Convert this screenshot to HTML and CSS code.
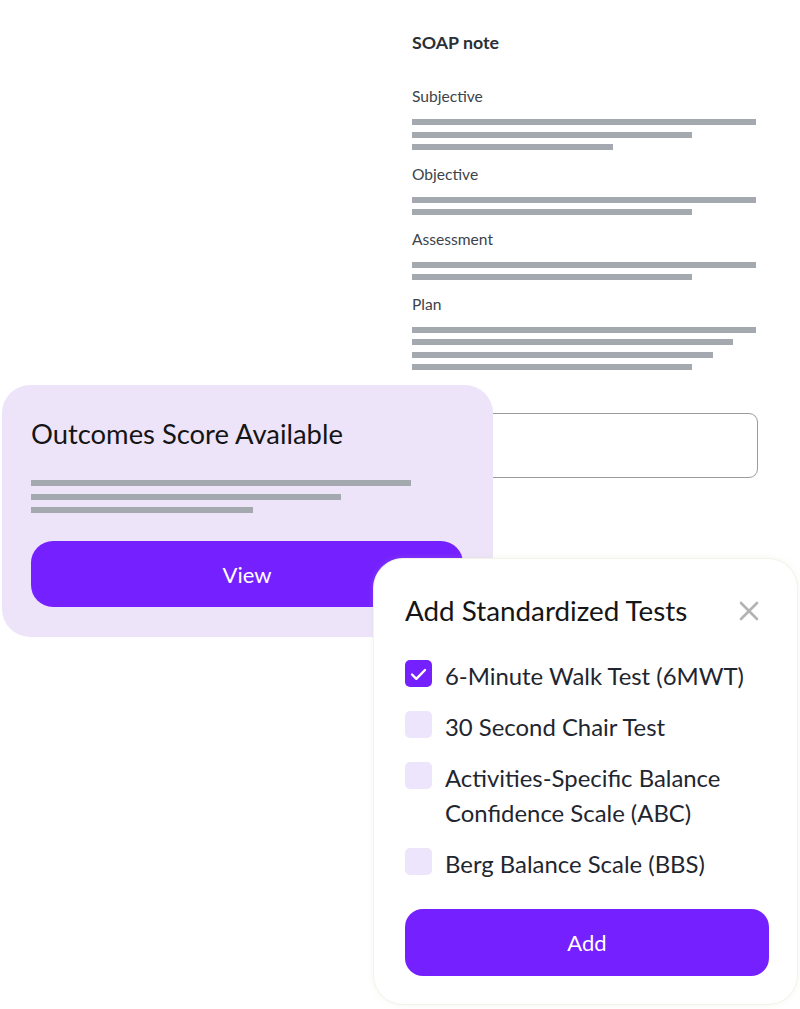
FILE: index.html
```html
<!DOCTYPE html>
<html lang="en">
<head>
<meta charset="utf-8">
<title>SOAP note</title>
<link rel="stylesheet" href="styles.css">
</head>
<body>
<div class="canvas">
  <section class="soap">
    <h2 class="soap-title">SOAP note</h2>
    <div class="soap-section">
      <div class="soap-label">Subjective</div>
      <div class="bars">
        <div class="bar w-full"></div>
        <div class="bar w-280"></div>
        <div class="bar w-200"></div>
      </div>
    </div>
    <div class="soap-section">
      <div class="soap-label">Objective</div>
      <div class="bars">
        <div class="bar w-full"></div>
        <div class="bar w-280"></div>
      </div>
    </div>
    <div class="soap-section">
      <div class="soap-label">Assessment</div>
      <div class="bars">
        <div class="bar w-full"></div>
        <div class="bar w-280"></div>
      </div>
    </div>
    <div class="soap-section">
      <div class="soap-label">Plan</div>
      <div class="bars">
        <div class="bar w-full"></div>
        <div class="bar w-321"></div>
        <div class="bar w-301"></div>
        <div class="bar w-280"></div>
      </div>
    </div>
    <div class="soap-section last">
      <div class="soap-label">Changes</div>
      <div class="textbox"></div>
    </div>
  </section>

  <section class="outcome-card">
    <h3 class="outcome-title">Outcomes Score Available</h3>
    <div class="bars outcome-bars">
      <div class="bar o-1"></div>
      <div class="bar o-2"></div>
      <div class="bar o-3"></div>
    </div>
    <button class="btn view-btn">View</button>
  </section>

  <section class="tests-card">
    <div class="tests-head">
      <h3 class="tests-title">Add Standardized Tests</h3>
      <svg class="close" width="20" height="20" viewBox="0 0 20 20" aria-hidden="true">
        <path d="M2 2 L18 18 M18 2 L2 18" stroke="#b3b3b3" stroke-width="2.6" stroke-linecap="round" fill="none"/>
      </svg>
    </div>
    <ul class="tests-list">
      <li class="test-item">
        <span class="box checked">
          <svg width="27" height="27" viewBox="0 0 27 27" aria-hidden="true">
            <path d="M7 14.5 L11.3 18.8 L20 10" stroke="#fff" stroke-width="2.4" stroke-linecap="round" stroke-linejoin="round" fill="none"/>
          </svg>
        </span>
        <span class="test-text">6-Minute Walk Test (6MWT)</span>
      </li>
      <li class="test-item">
        <span class="box"></span>
        <span class="test-text">30 Second Chair Test</span>
      </li>
      <li class="test-item">
        <span class="box"></span>
        <span class="test-text">Activities-Specific Balance<br>Confidence Scale (ABC)</span>
      </li>
      <li class="test-item">
        <span class="box"></span>
        <span class="test-text">Berg Balance Scale (BBS)</span>
      </li>
    </ul>
    <button class="btn add-btn">Add</button>
  </section>
</div>
</body>
</html>
```

FILE: styles.css
```css
* { box-sizing: border-box; }
html, body { margin: 0; padding: 0; background: #fff; }
body { font-family: Lato, "Noto Sans", "Liberation Sans", sans-serif; }

.canvas {
  position: relative;
  width: 800px;
  height: 1009px;
  overflow: hidden;
  background: #fff;
}

/* SOAP note column */
.soap {
  margin-left: 412px;
  padding-top: 32px;
  width: 346px;
}
.soap-title {
  margin: 0 0 34px;
  font-size: 17.8px;
  line-height: 20px;
  font-weight: 700;
  color: #2b2f36;
}
.soap-section { margin-bottom: 13.2px; }
.soap-label {
  font-size: 15.6px;
  line-height: 20px;
  color: #3d434b;
  margin-bottom: 13.2px;
}
.soap-section.last .soap-label { margin-bottom: 9px; }
.bars {
  display: flex;
  flex-direction: column;
  gap: 6.6px;
}
.bar {
  height: 6px;
  background: #a3a9af;
}
.w-full { width: 344px; }
.w-280 { width: 280px; }
.w-200 { width: 201px; }
.w-321 { width: 321px; }
.w-301 { width: 301px; }
.textbox {
  width: 346px;
  height: 65px;
  border: 1.5px solid #9c9c9c;
  border-radius: 9px;
  background: #fff;
}

/* Outcomes card */
.outcome-card {
  position: absolute;
  left: 2px;
  top: 385px;
  width: 491px;
  height: 252px;
  background: #ede4f9;
  border-radius: 28px;
  padding: 32px 30px 0 29px;
}
.outcome-title {
  margin: 0;
  font-size: 27.4px;
  line-height: 34px;
  font-weight: 400;
  color: #151515;
}
.outcome-bars {
  margin-top: 29px;
  gap: 7.6px;
}
.o-1 { width: 380px; }
.o-2 { width: 310px; }
.o-3 { width: 222px; }

.btn {
  display: block;
  border: 0;
  background: #7520ff;
  color: #fff;
  font-family: Lato, "Noto Sans", "Liberation Sans", sans-serif;
  font-size: 22px;
  font-weight: 400;
  cursor: pointer;
}
.view-btn {
  margin-top: 28px;
  width: 432px;
  height: 66px;
  border-radius: 22px;
}

/* Tests card */
.tests-card {
  position: absolute;
  left: 373px;
  top: 558px;
  width: 425px;
  height: 447px;
  background: #fff;
  border: 1px solid #f3f3ea;
  border-radius: 30px;
  padding: 35px 29px 0 31px;
  box-shadow: 0 0 6px rgba(200, 200, 170, 0.18);
}
.tests-head {
  display: flex;
  align-items: center;
  justify-content: space-between;
  padding-right: 9px;
}
.tests-title {
  margin: 0;
  font-size: 27.8px;
  line-height: 34px;
  font-weight: 400;
  color: #151515;
}
.close { display: block; }
.tests-list {
  list-style: none;
  margin: 29.5px 0 0;
  padding: 0;
  display: flex;
  flex-direction: column;
  gap: 16px;
}
.test-item {
  display: flex;
  align-items: flex-start;
  gap: 13px;
}
.box {
  flex: none;
  width: 27px;
  height: 27px;
  margin-top: 2.5px;
  border-radius: 5px;
  background: #ede5fb;
}
.box.checked { background: #7520ff; }
.box svg { display: block; }
.test-text {
  font-size: 23.9px;
  line-height: 35px;
  color: #1f2630;
}
.add-btn {
  margin-top: 28px;
  width: 364px;
  height: 67px;
  border-radius: 18px;
}
```
